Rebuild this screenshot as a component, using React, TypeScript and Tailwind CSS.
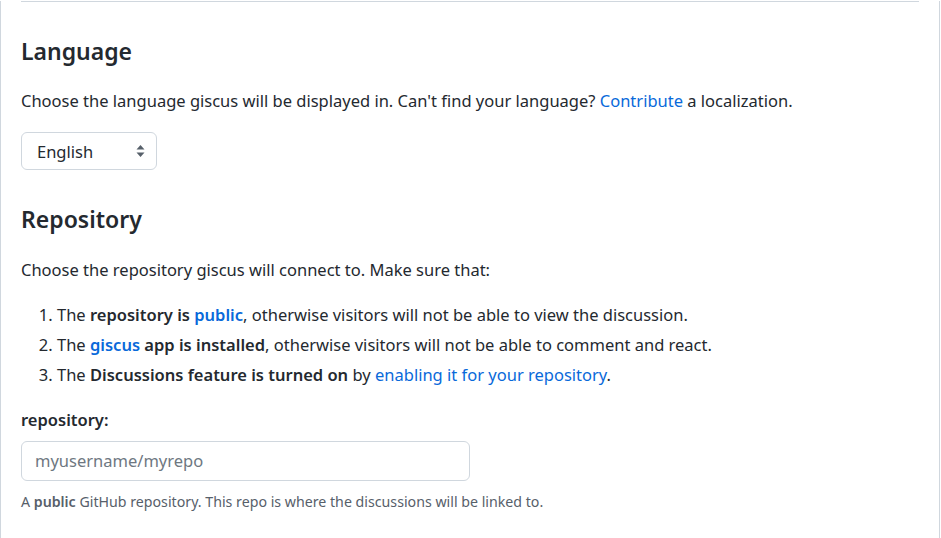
import React from 'react';

const link = 'text-[#0969da]';

export default function App() {
  return (
    <div
      className="min-h-[538px] w-[940px] border-x border-[#d0d7de] bg-white pl-[20px] pr-[20px] text-[#24292f]"
      style={{ fontFamily: '"Noto Sans", "Open Sans", sans-serif' }}
    >
      <div className="h-px w-[898px] bg-[#d0d7de] mt-px" />

      <h2 className="mt-[31px] text-[23px] font-semibold leading-[36px]">Language</h2>
      <p className="mt-[20px] text-[16.5px] leading-[24px]">
        Choose the language giscus will be displayed in. Can't find your language?{' '}
        <a className={link}>Contribute</a> a localization.
      </p>
      <div className="mt-[19px] flex h-[38px] w-[136px] items-center justify-between rounded-[6px] border border-[#d0d7de] pl-[15px] pr-[11px] text-[16.5px]">
        <span className="pt-[3px]">English</span>
        <svg width="9" height="14" viewBox="0 0 9 14" className="text-[#57606a]">
          <path d="M4.5 1 L8.5 5.5 H0.5 Z M4.5 13 L8.5 8.5 H0.5 Z" fill="currentColor" />
        </svg>
      </div>

      <h2 className="mt-[31px] text-[23px] font-semibold leading-[36px]">Repository</h2>
      <p className="mt-[21px] text-[16.5px] leading-[24px]">
        Choose the repository giscus will connect to. Make sure that:
      </p>
      <ol className="mt-[21px] list-decimal pl-[36px] text-[16.5px] leading-[24px]">
        <li>
          The <strong className="font-semibold">repository is <a className={link}>public</a></strong>, otherwise visitors will not be able to view the discussion.
        </li>
        <li className="mt-[6px]">
          The <strong className="font-semibold"><a className={link}>giscus</a> app is installed</strong>, otherwise visitors will not be able to comment and react.
        </li>
        <li className="mt-[6px]">
          The <strong className="font-semibold">Discussions feature is turned on</strong> by{' '}
          <a className={link}>enabling it for your repository</a>.
        </li>
      </ol>

      <label className="mt-[21px] block text-[16.5px] font-semibold leading-[24px]">repository:</label>
      <div className="mt-[9px] flex h-[40px] w-[449px] items-center rounded-[6px] border border-[#d0d7de] px-[13px] text-[16.5px] text-[#6e7781]">
        myusername/myrepo
      </div>
      <p className="mt-[11px] text-[14.2px] leading-[20px] text-[#57606a]">
        A <strong className="font-semibold">public</strong> GitHub repository. This repo is where the discussions will be linked to.
      </p>
    </div>
  );
}
